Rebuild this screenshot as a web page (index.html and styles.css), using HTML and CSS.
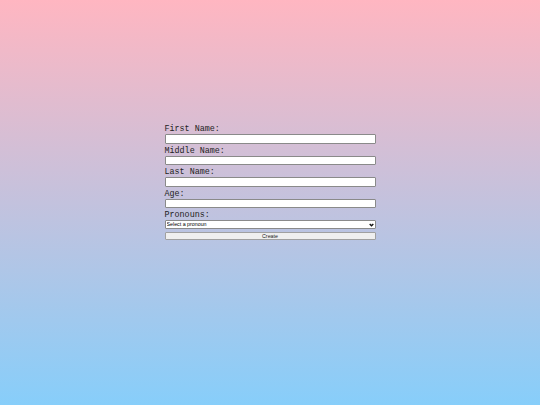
FILE: index.html
```html
<!DOCTYPE html>
<html>
<head>
<meta charset="utf-8">
<link rel="stylesheet" href="styles.css">
</head>
<body>
<div class="page">
  <form class="form">
    <label class="label">First Name:</label>
    <input class="field" type="text">
    <label class="label">Middle Name:</label>
    <input class="field" type="text">
    <label class="label">Last Name:</label>
    <input class="field" type="text">
    <label class="label">Age:</label>
    <input class="field" type="text">
    <label class="label">Pronouns:</label>
    <div class="select-wrap">
      <select class="select"><option>Select a pronoun</option></select>
      <svg class="arrow" width="5" height="4" viewBox="0 0 5 4"><path d="M0.7 0.9 L2.5 2.7 L4.3 0.9" fill="none" stroke="#111" stroke-width="1.4"/></svg>
    </div>
    <button class="button" type="button">Create</button>
  </form>
</div>
</body>
</html>
```
FILE: styles.css
```css
html, body {
  margin: 0;
  padding: 0;
}
body {
  width: 540px;
  height: 405px;
  background: linear-gradient(to bottom, #ffb6c1, #87cefa);
  font-family: "Liberation Mono", monospace;
}
.page {
  display: flex;
  justify-content: center;
  padding-top: 124px;
}
.form {
  width: 211px;
  display: flex;
  flex-direction: column;
}
.label {
  font-size: 8.4px;
  line-height: 10px;
  color: #222;
}
.field {
  box-sizing: border-box;
  width: 100%;
  height: 9.5px;
  margin: 0 0 2px 0;
  padding: 0;
  border: 1px solid #8a8a8a;
  border-radius: 1px;
  background: #fff;
}
.select-wrap {
  position: relative;
  width: 100%;
  height: 8.5px;
  margin: 0 0 2px 0;
}
.select {
  box-sizing: border-box;
  display: block;
  width: 100%;
  height: 8.5px;
  margin: 0;
  padding: 0 1px;
  -webkit-appearance: none;
  appearance: none;
  font-family: "Liberation Sans", Arial, sans-serif;
  font-size: 5.3px;
  line-height: 7px;
  border: 1px solid #8a8a8a;
  border-radius: 1px;
  background: #fff;
  color: #000;
}
.arrow {
  position: absolute;
  right: 2px;
  top: 2.5px;
}
.button {
  box-sizing: border-box;
  width: 100%;
  height: 8.5px;
  margin: 1px 0 0 0;
  padding: 0;
  font-family: "Liberation Sans", Arial, sans-serif;
  font-size: 5.3px;
  line-height: 6px;
  border: 1px solid #a0a0a0;
  border-radius: 1px;
  background: #efefef;
  color: #222;
}
```
